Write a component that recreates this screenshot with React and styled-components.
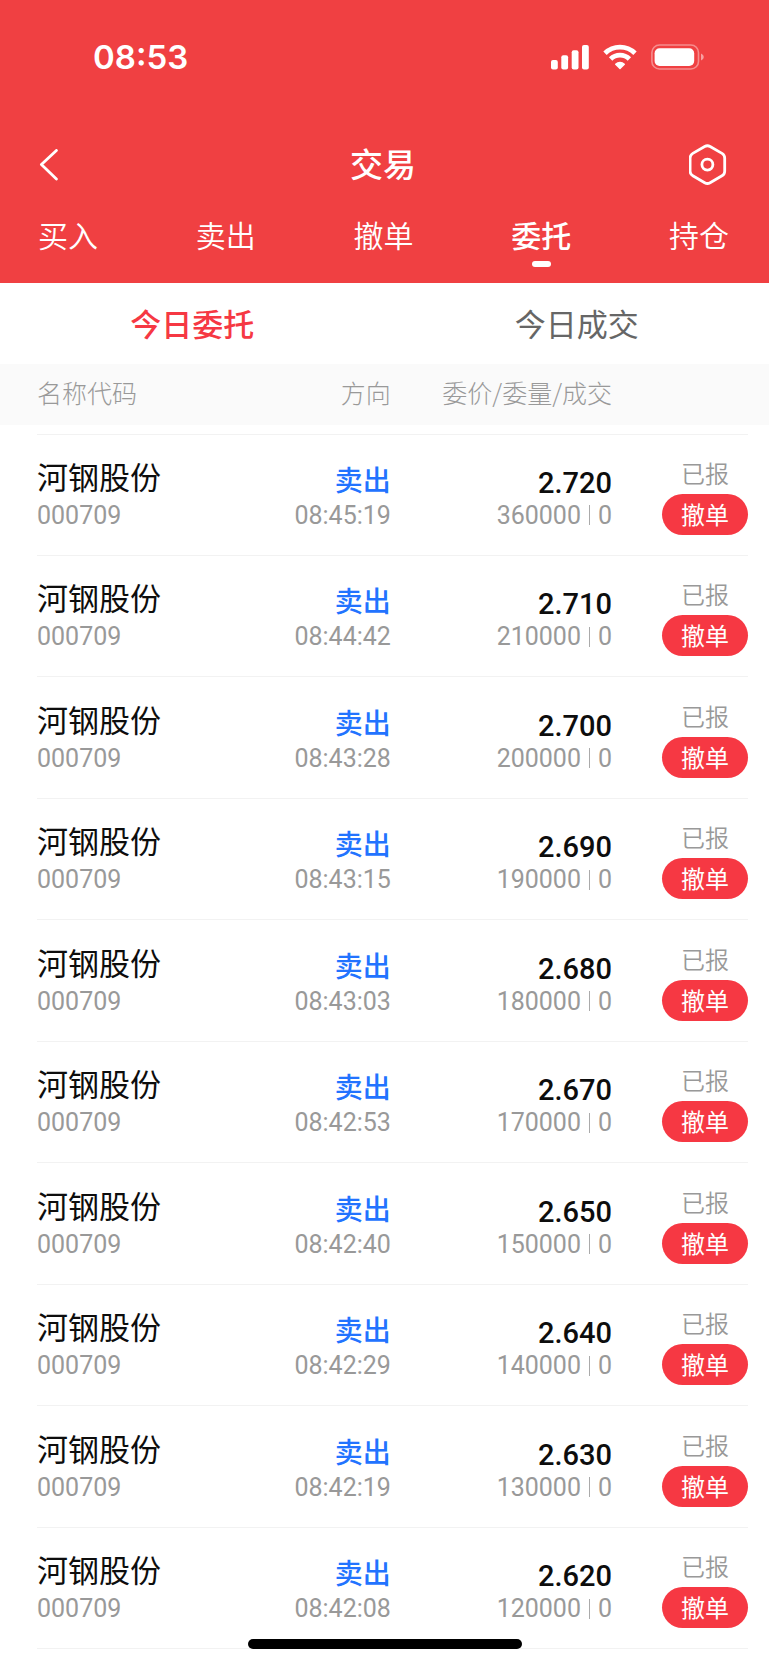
import React, { useState } from "react";
import styled, { createGlobalStyle } from "styled-components";

const GlobalStyle = createGlobalStyle`
  * {
    box-sizing: border-box;
  }

  body {
    margin: 0;
    background-color: #fff;
    color: #0d0d0d;
    font-family: "Noto Sans CJK SC", sans-serif;
  }

  button {
    padding: 0;
    border: none;
    background: none;
    color: inherit;
    font: inherit;
    cursor: pointer;
  }
`;

const Page = styled.div`
  display: flex;
  flex-direction: column;
  min-height: 100vh;
  padding-bottom: 16px;
`;

const Header = styled.header`
  background-color: #f04042;
  color: #fff;
`;

const StatusBar = styled.div`
  display: flex;
  align-items: center;
  justify-content: space-between;
  height: 114px;
  padding: 0 64px 0 93px;
`;

const Clock = styled.time`
  font-family: Inter, sans-serif;
  font-size: 33px;
  font-weight: 600;
`;

const StatusIcons = styled.div`
  display: flex;
  align-items: center;
  gap: 14px;
`;

const NavBar = styled.div`
  display: grid;
  grid-template-columns: 1fr auto 1fr;
  align-items: center;
  height: 102px;
  padding: 0 42px 0 39px;
`;

const IconButton = styled.button`
  display: flex;
  justify-self: ${({ $end }) => ($end ? "end" : "start")};
`;

const Title = styled.h1`
  margin: 0;
  padding-bottom: 4px;
  font-size: 33px;
  font-weight: 500;
  line-height: 48px;
`;

const MainTabs = styled.nav`
  display: flex;
  justify-content: space-between;
  padding: 0 40px 16px 38px;
`;

const MainTab = styled.button`
  display: flex;
  flex-direction: column;
  align-items: center;
  gap: 9px;
  font-size: 30px;
  font-weight: ${({ $active }) => ($active ? 500 : 350)};
  line-height: 36px;

  &::after {
    content: "";
    width: 19px;
    height: 6px;
    border-radius: 3px;
    background-color: ${({ $active }) => ($active ? "#fff" : "transparent")};
  }
`;

const SubTabs = styled.div`
  display: grid;
  grid-template-columns: 1fr 1fr;
`;

const SubTab = styled.button`
  height: 81px;
  padding-bottom: 2px;
  color: ${({ $active }) => ($active ? "#f63843" : "#666")};
  font-size: 31px;
  font-weight: ${({ $active }) => ($active ? 500 : 400)};
`;

const OrderTable = styled.table`
  display: flex;
  flex: 1;
  flex-direction: column;
`;

const TableHead = styled.thead`
  display: block;
  background-color: #fafafa;
`;

const TableBody = styled.tbody`
  display: grid;
  flex: 1;
  grid-auto-rows: 1fr;
  padding-top: 9px;
`;

const Row = styled.tr`
  display: grid;
  grid-template-columns: 4fr 4fr 5fr 136px;
  margin: 0 21px 0 37px;
`;

const OrderRow = styled(Row)`
  align-items: end;
  padding-bottom: 20px;
  border-bottom: 1px solid #f2f2f2;

  &:first-child {
    border-top: 1px solid #f2f2f2;
  }
`;

const HeadCell = styled.th`
  padding: 0 0 4px;
  color: #999;
  font-size: 25px;
  font-weight: 300;
  line-height: 57px;
  text-align: ${({ $align }) => $align || "right"};
`;

const Cell = styled.td`
  display: flex;
  flex-direction: column;
  align-items: ${({ $align }) => $align || "flex-end"};
  padding: 0;
`;

const StockName = styled.span`
  font-size: 31px;
  line-height: 36px;
`;

const Direction = styled.span`
  color: #2273ff;
  font-size: 28px;
  font-weight: 500;
  line-height: 30px;
`;

const Price = styled.span`
  font-family: Roboto, sans-serif;
  font-size: 29px;
  font-weight: 500;
  line-height: 22px;
`;

const Detail = styled.span`
  display: flex;
  align-items: center;
  padding-top: 2px;
  color: #999;
  font-family: Roboto, sans-serif;
  font-size: 25px;
  line-height: 39px;
`;

const Divider = styled.i`
  width: 1px;
  height: 20px;
  margin: 0 8px;
  background-color: #aaa;
`;

const ActionStack = styled.div`
  display: flex;
  flex-direction: column;
  align-items: center;
  width: 86px;
`;

const OrderState = styled.span`
  color: #999;
  font-size: 24px;
  font-weight: 350;
  line-height: 43px;
`;

const CancelButton = styled.button`
  width: 100%;
  padding-bottom: 2px;
  border-radius: 21px;
  background-color: #f63843;
  color: #fff;
  font-size: 24px;
  line-height: 39px;
`;

const HomeIndicator = styled.div`
  position: fixed;
  bottom: 16px;
  left: 50%;
  width: 274px;
  height: 10px;
  border-radius: 5px;
  background-color: #000;
  transform: translateX(-50%);
`;

const SignalIcon = () => (
  <svg width="38" height="26" viewBox="0 0 38 26" fill="#fff" aria-hidden="true">
    <rect x="0" y="16" width="6.8" height="9.4" rx="2" />
    <rect x="10.3" y="11.3" width="6.8" height="14.1" rx="2" />
    <rect x="20.7" y="6.2" width="6.8" height="19.2" rx="2" />
    <rect x="31" y="1" width="6.8" height="24.4" rx="2" />
  </svg>
);

const WifiIcon = () => (
  <svg width="34" height="26" viewBox="0 0 34 26" aria-hidden="true">
    <g fill="none" stroke="#fff" strokeWidth="4.8">
      <path d="M2 9.2A21.4 21.4 0 0 1 32 9.2" />
      <path d="M7.6 15A13.4 13.4 0 0 1 26.4 15" />
    </g>
    <path
      d="M12.2 19.7a7 7 0 0 1 9.6 0q.5.5 0 1l-4.3 4.3q-.5.5-1 0l-4.3-4.3q-.5-.5 0-1z"
      fill="#fff"
    />
  </svg>
);

const BatteryIcon = () => (
  <svg width="54" height="26" viewBox="0 0 54 26" fill="#fff" aria-hidden="true">
    <rect
      x="0.9"
      y="1"
      width="46.6"
      height="24"
      rx="7.6"
      fill="none"
      stroke="#fff"
      strokeOpacity="0.4"
      strokeWidth="1.6"
    />
    <rect x="3.6" y="4.2" width="39.6" height="17.8" rx="5" />
    <path d="M50 9.6v7q2.8-1 2.8-3.5T50 9.6z" fillOpacity="0.5" />
  </svg>
);

const BackIcon = () => (
  <svg width="20" height="32" viewBox="0 0 20 32" fill="none" aria-hidden="true">
    <path
      d="M17.4 1.4L2.4 15.6l15 14.4"
      stroke="#fff"
      strokeWidth="2.8"
      strokeLinecap="round"
      strokeLinejoin="round"
    />
  </svg>
);

const SettingsIcon = () => (
  <svg width="38" height="42" viewBox="0 0 38 42" fill="none" aria-hidden="true">
    <g stroke="#fff" strokeWidth="2.8">
      <path d="M15.7 2.5a5.4 5.4 0 0 1 5.4 0l11.9 6.9a5.4 5.4 0 0 1 2.7 4.6v13.2a5.4 5.4 0 0 1-2.7 4.6l-11.9 6.9a5.4 5.4 0 0 1-5.4 0l-11.9-6.9a5.4 5.4 0 0 1-2.7-4.6V14a5.4 5.4 0 0 1 2.7-4.6z" />
      <circle cx="18.4" cy="20.6" r="5.5" />
    </g>
  </svg>
);

const mainTabs = ["买入", "卖出", "撤单", "委托", "持仓"];
const subTabs = ["今日委托", "今日成交"];

const orders = [
  { time: "08:45:19", price: 2.72, amount: 360000 },
  { time: "08:44:42", price: 2.71, amount: 210000 },
  { time: "08:43:28", price: 2.7, amount: 200000 },
  { time: "08:43:15", price: 2.69, amount: 190000 },
  { time: "08:43:03", price: 2.68, amount: 180000 },
  { time: "08:42:53", price: 2.67, amount: 170000 },
  { time: "08:42:40", price: 2.65, amount: 150000 },
  { time: "08:42:29", price: 2.64, amount: 140000 },
  { time: "08:42:19", price: 2.63, amount: 130000 },
  { time: "08:42:08", price: 2.62, amount: 120000 },
];

const Order = ({ order }) => (
  <OrderRow>
    <Cell $align="flex-start">
      <StockName>河钢股份</StockName>
      <Detail>000709</Detail>
    </Cell>
    <Cell>
      <Direction>卖出</Direction>
      <Detail>{order.time}</Detail>
    </Cell>
    <Cell>
      <Price>{order.price.toFixed(3)}</Price>
      <Detail>
        {order.amount}
        <Divider />0
      </Detail>
    </Cell>
    <Cell>
      <ActionStack>
        <OrderState>已报</OrderState>
        <CancelButton type="button">撤单</CancelButton>
      </ActionStack>
    </Cell>
  </OrderRow>
);

const App = () => {
  const [mainTab, setMainTab] = useState("委托");
  const [subTab, setSubTab] = useState("今日委托");

  return (
    <Page>
      <GlobalStyle />
      <Header>
        <StatusBar>
          <Clock>08:53</Clock>
          <StatusIcons>
            <SignalIcon />
            <WifiIcon />
            <BatteryIcon />
          </StatusIcons>
        </StatusBar>
        <NavBar>
          <IconButton type="button" aria-label="返回">
            <BackIcon />
          </IconButton>
          <Title>交易</Title>
          <IconButton type="button" aria-label="设置" $end>
            <SettingsIcon />
          </IconButton>
        </NavBar>
        <MainTabs>
          {mainTabs.map((tab) => (
            <MainTab
              key={tab}
              type="button"
              $active={tab === mainTab}
              onClick={() => setMainTab(tab)}
            >
              {tab}
            </MainTab>
          ))}
        </MainTabs>
      </Header>
      <SubTabs>
        {subTabs.map((tab) => (
          <SubTab
            key={tab}
            type="button"
            $active={tab === subTab}
            onClick={() => setSubTab(tab)}
          >
            {tab}
          </SubTab>
        ))}
      </SubTabs>
      <OrderTable>
        <TableHead>
          <Row>
            <HeadCell $align="left">名称代码</HeadCell>
            <HeadCell>方向</HeadCell>
            <HeadCell>委价/委量/成交</HeadCell>
            <HeadCell aria-label="操作" />
          </Row>
        </TableHead>
        <TableBody>
          {orders.map((order) => (
            <Order key={order.time} order={order} />
          ))}
        </TableBody>
      </OrderTable>
      <HomeIndicator />
    </Page>
  );
};

export default App;
